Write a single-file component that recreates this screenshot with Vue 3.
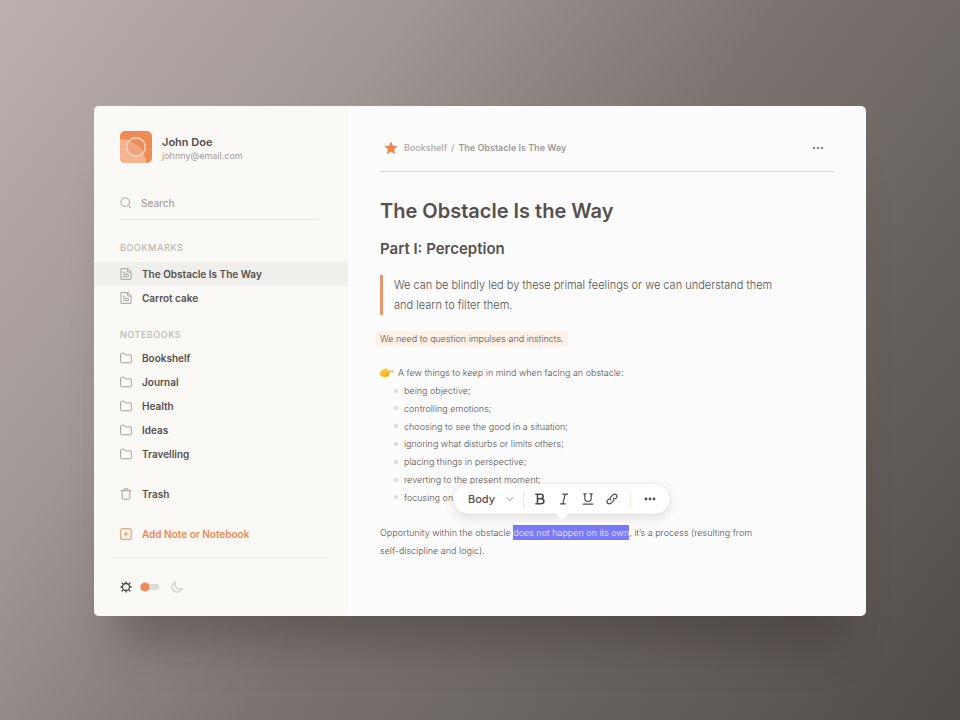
<script setup>
import { ref } from 'vue'

const bookmarks = [
  { label: 'The Obstacle Is The Way', active: true },
  { label: 'Carrot cake', active: false },
]
const notebooks = ['Bookshelf', 'Journal', 'Health', 'Ideas', 'Travelling']
const points = [
  'being objective;',
  'controlling emotions;',
  'choosing to see the good in a situation;',
  'ignoring what disturbs or limits others;',
  'placing things in perspective;',
  'reverting to the present moment;',
  'focusing on',
]
const query = ref('')
const dark = ref(false)
</script>

<template>
  <div class="page">
    <div class="window">
      <aside class="sidebar">
        <div class="profile">
          <svg class="avatar" viewBox="0 0 32 32" aria-hidden="true">
            <rect width="32" height="32" rx="5" fill="#ef8b55" />
            <path d="M0 8C12 8 25 19 26.500 32H5a5 5 0 0 1-5-5Z" fill="#f3b48f" />
            <path d="M7 12A10 10 0 0 0 24 22C21 16 14 10 7 12Z" fill="#f0a67c" />
            <circle cx="16" cy="16" r="9.300" fill="none" stroke="#f8d9c6" stroke-width="1.500" />
          </svg>
          <div class="who">
            <div class="name">John Doe</div>
            <div class="email">johnny@email.com</div>
          </div>
        </div>

        <label class="search">
          <svg class="icon" viewBox="0 0 12 12" aria-hidden="true">
            <circle cx="5.200" cy="5.200" r="4.300" />
            <path d="M8.500 8.500 11 11" />
          </svg>
          <input v-model="query" type="search" placeholder="Search" aria-label="Search" />
        </label>

        <h2 class="group">Bookmarks</h2>
        <nav class="list bookmarks" aria-label="Bookmarks">
          <a v-for="b in bookmarks" :key="b.label" href="#" class="item" :class="{ active: b.active }">
            <svg class="icon" viewBox="0 0 12 12" aria-hidden="true">
              <path d="M1 .7h6.800L11 3.800v7.500H1Z" />
              <path d="M3 4.200h2.500M3 6.400h6M3 8.600h6M7.600.9V4H11" />
            </svg>
            {{ b.label }}
          </a>
        </nav>

        <h2 class="group second">Notebooks</h2>
        <nav class="list" aria-label="Notebooks">
          <a v-for="n in notebooks" :key="n" href="#" class="item">
            <svg class="icon" viewBox="0 0 12 12" aria-hidden="true">
              <path d="M.6 2.200Q.6 1.200 1.600 1.200H3.900L5.200 2.900H10.400Q11.400 2.900 11.400 3.900V9.800Q11.400 10.800 10.400 10.800H1.600Q.6 10.800.6 9.800Z" />
            </svg>
            {{ n }}
          </a>
        </nav>

        <a href="#" class="item spaced">
          <svg class="icon" viewBox="0 0 12 12" aria-hidden="true">
            <path d="M.6 2.700h10.800M4 2.500V.8h4v1.700M2.200 2.900v7.400q0 1 1 1h5.600q1 0 1-1V2.900" />
          </svg>
          Trash
        </a>
        <button type="button" class="item spaced add">
          <svg class="icon" viewBox="0 0 12 12" aria-hidden="true">
            <rect x=".8" y=".8" width="10.400" height="10.400" rx=".8" />
            <path d="M6 3.500v5M3.500 6h5" />
          </svg>
          Add Note or Notebook
        </button>

        <div class="theme">
          <svg class="sun" viewBox="0 0 12 12" aria-hidden="true">
            <circle cx="6" cy="6" r="3.500" />
            <path d="M6 .4v2M6 9.600v2M.4 6h2M9.600 6h2M1.600 1.600l1.700 1.700M8.700 8.700l1.700 1.700M1.600 10.400l1.700-1.700M8.700 3.300l1.700-1.700" />
          </svg>
          <input v-model="dark" class="switch" type="checkbox" role="switch" aria-label="Dark theme" />
          <svg class="moon" viewBox="0 0 12 12" aria-hidden="true">
            <path d="M4.300 1A5.300 5.300 0 1 0 11.300 7.800 5.300 5.300 0 0 1 4.300 1Z" />
          </svg>
        </div>
      </aside>

      <main class="main">
        <header class="bar">
          <svg class="star" viewBox="0 0 14 14" aria-hidden="true">
            <path d="M7 .5 8.900 4.800 13.600 5.200 10.100 8.400 11.100 13.200 7 10.700 2.900 13.200 3.900 8.400.4 5.200 5.100 4.800Z" />
          </svg>
          <nav class="crumbs" aria-label="Breadcrumb">
            <a href="#">Bookshelf</a>
            <span>/</span>
            <a href="#" class="current">The Obstacle Is The Way</a>
          </nav>
          <button type="button" class="more" aria-label="More actions">
            <svg viewBox="0 0 12 4" aria-hidden="true">
              <circle cx="2" cy="2" r="1.300" /><circle cx="6" cy="2" r="1.300" /><circle cx="10" cy="2" r="1.300" />
            </svg>
          </button>
        </header>

        <article>
          <h1>The Obstacle Is the Way</h1>
          <h3>Part I: Perception</h3>
          <blockquote>We can be blindly led by these primal feelings or we can understand them and learn to filter them.</blockquote>
          <p class="marked"><mark>We need to question impulses and instincts.</mark></p>
          <p class="lead">
            <svg class="hand" viewBox="0 0 14 10" aria-hidden="true">
              <path d="M.3 3.400 3.500 1.600 6.200.5Q7.800.3 7.600 1.400L6.900 2.500H12.900Q13.900 2.700 13.800 3.500 13.700 4.300 12.800 4.300H9.300Q9.900 5.100 9.100 5.900 9.500 6.900 8.600 7.500 8.700 8.600 7.500 9H3.400L.3 7.900Z" fill="#fbc02d" />
              <path d="M6.800 4.400h2.500M6.400 6h2.700M6.200 7.600h2.300" fill="none" stroke="#e29112" stroke-width=".7" />
            </svg>
            A few things to keep in mind when facing an obstacle:
          </p>
          <ul>
            <li v-for="p in points" :key="p">{{ p }}</li>
          </ul>
          <div class="passage">
            <p>Opportunity within the obstacle <span class="selected">does not happen on its own</span>, it’s a process (resulting from self-discipline and logic).</p>
            <div class="toolbar" role="toolbar" aria-label="Text formatting">
              <div class="style">
                <select aria-label="Text style">
                  <option>Body</option>
                </select>
                <svg class="chevron" viewBox="0 0 8 6" aria-hidden="true"><path d="M.7 1.200 4 4.600 7.300 1.200" /></svg>
              </div>
              <div class="marks">
                <button type="button" aria-label="Bold">
                  <svg viewBox="0 0 12 12" aria-hidden="true">
                    <path d="M1.300 1.300H6.500Q9.200 1.300 9.200 3.500 9.200 5.700 6.500 5.700H3.500M6.500 5.700Q9.900 5.700 9.900 8.200 9.900 10.700 6.700 10.700H1.300M3.500 1.300V10.700" stroke-width="1.600" />
                  </svg>
                </button>
                <button type="button" aria-label="Italic">
                  <svg viewBox="0 0 12 12" aria-hidden="true"><path d="M4.300 1.100H10M2 10.900H7.700M7.200 1.100 4.800 10.900" /></svg>
                </button>
                <button type="button" aria-label="Underline">
                  <svg viewBox="0 0 12 12" aria-hidden="true"><path d="M1.300.9H4.400M7.600.9H10.700M2.800.9V5.200Q2.800 8.400 6 8.400 9.200 8.400 9.200 5.200V.9M.8 11.200H11.200" /></svg>
                </button>
                <button type="button" aria-label="Link">
                  <svg viewBox="0 0 12 12" aria-hidden="true">
                    <path d="M4.700 7.300Q3.300 5.700 4.700 4.200L7.200 1.700Q8.800.4 10.300 1.700 11.600 3.200 10.300 4.800L8.900 6.200M7.300 4.700Q8.700 6.300 7.300 7.800L4.800 10.300Q3.200 11.600 1.700 10.300.4 8.800 1.700 7.200L3.100 5.800" />
                  </svg>
                </button>
              </div>
              <button type="button" class="extra" aria-label="More formatting">
                <svg viewBox="0 0 12 4" aria-hidden="true">
                  <circle cx="2" cy="2" r="1.400" /><circle cx="6" cy="2" r="1.400" /><circle cx="10" cy="2" r="1.400" />
                </svg>
              </button>
            </div>
          </div>
        </article>
      </main>
    </div>
  </div>
</template>

<style>
body {
  margin: 0;
}
</style>

<style scoped>
* {
  box-sizing: border-box;
}
.page {
  min-height: 100vh;
  padding: 2px 94px 0;
  display: flex;
  align-items: center;
  font-family: Inter, 'Liberation Sans', sans-serif;
  color: #55504f;
  background: linear-gradient(127deg, #bbb0ae 0%, #a09693 28%, #7b7471 52%, #67615e 75%, #504a49 100%);
}
.window {
  flex: 1;
  display: flex;
  border-radius: 5px;
  background: #fcfcfc;
  box-shadow: 0 50px 40px -24px rgba(50, 42, 40, 0.36);
}
h1, h2, h3, p, ul, blockquote {
  margin: 0;
  padding: 0;
}
a {
  color: inherit;
  text-decoration: none;
}
button {
  border: 0;
  padding: 0;
  background: none;
  color: inherit;
  font: inherit;
  cursor: pointer;
}
svg {
  flex: none;
  display: block;
}

.sidebar {
  flex: 0 0 254px;
  display: flex;
  flex-direction: column;
  padding: 25px 0 17px;
  border-radius: 5px 0 0 5px;
  background: #fbf9f5;
}
.profile {
  display: flex;
  gap: 10px;
  padding: 0 26px;
}
.avatar {
  width: 32px;
  height: 32px;
}
.name {
  font-size: 11px;
  font-weight: 600;
  line-height: 16px;
  padding-top: 3px;
}
.email {
  font-size: 9px;
  line-height: 12px;
  color: #a09d9b;
}
.icon {
  width: 12px;
  height: 12px;
  fill: none;
  stroke: #a5a19f;
  stroke-width: 1;
}
.search {
  display: flex;
  align-items: center;
  gap: 9px;
  height: 33px;
  margin: 24px 30px 0 26px;
  border-bottom: 1px solid #e9e6e2;
}
.search input {
  flex: 1;
  min-width: 0;
  border: 0;
  padding: 0;
  outline: 0;
  background: none;
  font: 500 10px/16px Inter, 'Liberation Sans', sans-serif;
  color: #504b4a;
}
.search input::placeholder {
  color: #a5a2a0;
  opacity: 1;
}
.group {
  margin-top: 20px;
  padding: 0 26px;
  font-size: 9px;
  font-weight: 600;
  line-height: 16px;
  letter-spacing: 0.5px;
  text-transform: uppercase;
  color: #c3c0bd;
}
.second {
  margin-top: 17px;
}
.list {
  display: flex;
  flex-direction: column;
  margin-top: 3px;
}
.bookmarks {
  margin-top: 6px;
}
.item {
  display: flex;
  align-items: center;
  gap: 10px;
  height: 24px;
  padding: 0 26px;
  font-size: 10px;
  font-weight: 600;
}
.active {
  background: #f0efec;
}
.spaced {
  margin-top: 16px;
}
.add {
  color: #ea8a57;
}
.add .icon {
  stroke: #ea8a57;
}
.theme {
  display: flex;
  align-items: center;
  margin: 11px 20px 0;
  padding: 17px 6px 0;
  height: 42px;
  border-top: 1px solid #eeeae6;
}
.sun,
.moon {
  width: 12px;
  height: 12px;
  fill: none;
  stroke: #4b4645;
  stroke-width: 1.3px;
}
.moon {
  stroke: #d0cdca;
  margin-left: 12px;
}
.switch {
  appearance: none;
  width: 19px;
  height: 10px;
  margin: 0 0 0 8px;
  border-radius: 5px;
  background: radial-gradient(circle at 5px 5px, #ee8955 4px, transparent 5px), linear-gradient(#dedbd8, #dedbd8) 0 2px / 100% 6px no-repeat;
}
.switch:checked {
  background: radial-gradient(circle at 14px 5px, #ee8955 4px, transparent 5px), linear-gradient(#dedbd8, #dedbd8) 0 2px / 100% 6px no-repeat;
}

.main {
  flex: 1;
  min-width: 0;
  padding: 0 32px 24px;
}
.bar {
  display: flex;
  align-items: center;
  height: 66px;
  padding: 30px 10px 12px 4px;
  border-bottom: 1px solid #dcd9d3;
}
.star {
  width: 14px;
  height: 14px;
  fill: #ec8750;
}
.crumbs {
  display: flex;
  gap: 4px;
  margin-left: 6px;
  font-size: 9px;
  font-weight: 500;
  color: #aaa7a5;
}
.current {
  font-weight: 600;
  color: #9d9a98;
}
.more {
  margin-left: auto;
}
.more svg,
.extra svg {
  width: 12px;
  height: 4px;
  fill: #8e8a88;
}
h1 {
  margin-top: 25px;
  font-size: 20px;
  font-weight: 600;
  line-height: 28px;
}
h3 {
  margin-top: 14px;
  font-size: 15px;
  font-weight: 600;
  line-height: 20px;
}
blockquote {
  margin-top: 16px;
  max-width: 400px;
  padding-left: 11px;
  border-left: 3px solid #e8956b;
  font-size: 11px;
  font-weight: 300;
  line-height: 20px;
}
p {
  font-size: 9px;
  font-weight: 300;
  line-height: 18px;
}
.marked {
  display: flex;
  margin: 16px 0 0 -4px;
}
mark {
  padding: 0 4px;
  line-height: 16px;
  color: inherit;
  background: #fef1e7;
}
.lead {
  display: flex;
  align-items: center;
  gap: 4px;
  margin-top: 17px;
}
.hand {
  width: 14px;
  height: 10px;
}
ul {
  display: flex;
  flex-direction: column;
  justify-content: space-between;
  height: 124px;
  list-style: none;
}
li {
  display: flex;
  align-items: center;
  gap: 6px;
  padding-left: 14px;
  font-size: 9px;
  font-weight: 300;
  line-height: 17px;
}
li::before {
  content: '';
  width: 4px;
  height: 4px;
  border-radius: 50%;
  background: #dad8d6;
}
.passage {
  position: relative;
  max-width: 384px;
  margin-top: 18px;
}
.selected {
  padding: 2px 0;
  color: #f1f0ff;
  background: #7b79fb;
}
.toolbar {
  position: absolute;
  left: 73px;
  bottom: calc(100% + 10px);
  display: flex;
  align-items: center;
  height: 30px;
  border-radius: 15px;
  background: #fff;
  box-shadow: 0 0 1px rgba(90, 75, 65, 0.3), 0 4px 12px rgba(90, 75, 65, 0.16);
}
.toolbar::after {
  content: '';
  position: absolute;
  top: 100%;
  left: 50%;
  margin-left: -6px;
  border: 6px solid transparent;
  border-top-color: #fff;
  border-bottom: 0;
}
.style {
  display: flex;
  align-items: center;
  padding: 0 9px 0 15px;
}
.style select {
  appearance: none;
  width: 38px;
  border: 0;
  padding: 0;
  background: none;
  font: 500 11px/16px Inter, 'Liberation Sans', sans-serif;
  color: #55504f;
}
.chevron {
  width: 8px;
  height: 6px;
  fill: none;
  stroke: #99928f;
}
.marks {
  display: flex;
  align-items: center;
  gap: 12px;
  height: 17px;
  padding: 0 12px 0 10px;
  border: solid #f1eae5;
  border-width: 0 1px;
}
.marks svg {
  width: 12px;
  height: 12px;
  fill: none;
  stroke: #4f4a49;
  stroke-width: 1.2px;
}
.extra {
  padding: 0 14px 0 13px;
}
.extra svg {
  fill: #4f4a49;
}
</style>
